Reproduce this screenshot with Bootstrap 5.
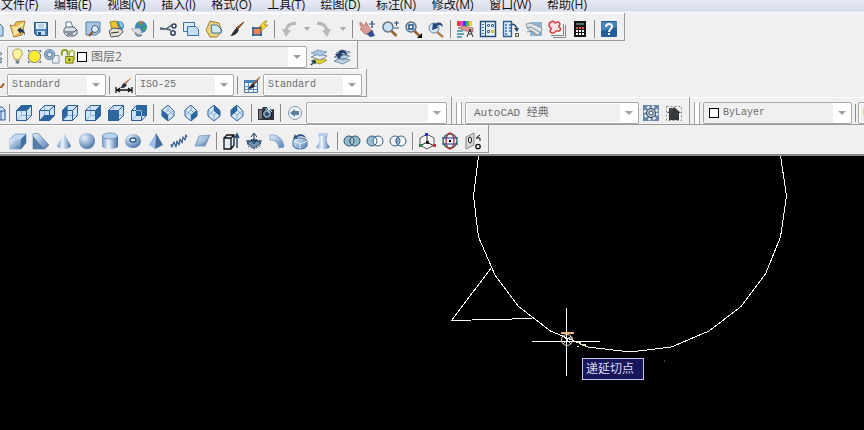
<!DOCTYPE html>
<html lang="zh-CN">
<head>
<meta charset="utf-8">
<meta name="viewport" content="width=device-width, initial-scale=1">
<title>AutoCAD 经典</title>
<link href="https://cdn.jsdelivr.net/npm/bootstrap@5.3.0/dist/css/bootstrap.min.css" rel="stylesheet">
<style>
body{background:#f0f0f0;font-family:"Open Sans","Noto Sans CJK SC",sans-serif;font-size:12px;line-height:16px}
.menu-strip{height:13px;background:linear-gradient(#e9ecf6,#d5d9ea 11px,#f7f7fb 12px)}
.menu-items{width:100%;max-width:587px;padding-left:1px}
.menu-strip a{color:#111;text-decoration:none}
.bar-row{height:28px}
.tool-bar{height:28px;padding:4px 4px 0 0;border:solid #9a9a9a;border-width:0 1px 1px 0;box-shadow:inset 0 1px #fff}
.tool{width:23px;height:22px;padding:0;border:0;background:none;flex:none;display:flex;align-items:center;justify-content:center}
.tool svg{width:18px;height:18px;flex:none;display:block}
.tool.cut{width:6px;justify-content:flex-end;overflow:hidden}
.tool.drop{width:13px}
.tool.drop svg{width:6px;height:4px}
.split{width:6px;height:18px;flex:none;background:linear-gradient(#8c8c8c,#8c8c8c) 3px 0/1px 100% no-repeat}
.grip{width:6px;height:22px;margin:0 3px 0 4px;flex:none;border:solid #a5a5a5;border-width:0 1px;background:#fff}
.lead-in{width:6px;flex:none}
.nudge{width:1px;flex:none}
.combo{height:22px;border:1px solid #a9a9a9;border-radius:2px;padding:0 20px 0 4px;color:#6c6c6c;appearance:none;box-shadow:inset 0 0 0 1px #fff;
 font:10px/18px "Liberation Mono","Noto Sans CJK SC",monospace;flex:none;
 background:url("data:image/svg+xml,%3Csvg xmlns='http://www.w3.org/2000/svg' viewBox='0 0 8 4'%3E%3Cpath d='M0 0h8L4 4z' fill='%23a0a0a0'/%3E%3C/svg%3E") right 5px center/8px 4px no-repeat,
 linear-gradient(#fff,#fff) right/18px 100% no-repeat,#f0f0f0}
.combo.style{width:99px}
.combo.view{width:141px}
.combo.space{width:174px;font-size:11px;padding-left:8px}
.combo.flat{flex:1;height:20px;border:0;padding-left:4px;font:12px/18px "Open Sans","Noto Sans CJK SC",sans-serif;box-shadow:none;min-width:0}
.layer-box{width:300px;height:22px;border:1px solid #a9a9a9;border-radius:2px;padding-left:1px}
.layer-box svg{width:17px;height:17px;flex:none;display:block}
.color-box{width:149px;height:22px;border:1px solid #a9a9a9;border-radius:2px;padding-left:5px}
.color-box .combo{font:10px/18px "Liberation Mono",monospace}
.swatch{width:10px;height:10px;border:1px solid #000;background:#fff;flex:none}
.board{background:#000;border-top:2px solid #858585;margin-top:1px;overflow:hidden}
.board svg{display:block;width:864px;height:274px}
.snap-tip{left:582px;top:202px;padding:2px 9px 2px 3px;border:1px solid #c6c6ea;background:#17175c;color:#dcdcf2}
</style>
</head>
<body>
<svg width="0" height="0" class="position-absolute" aria-hidden="true">
<defs>
<linearGradient id="blue" x1="0" y1="0" x2="1" y2="1"><stop offset="0" stop-color="#eaf3fc"/><stop offset="1" stop-color="#4f7cb2"/></linearGradient>
<linearGradient id="tube"><stop offset="0" stop-color="#6b93c4"/><stop offset=".4" stop-color="#eef6ff"/><stop offset="1" stop-color="#426da3"/></linearGradient>
<radialGradient id="ball" cx=".35" cy=".3" r=".8"><stop offset="0" stop-color="#e8f2fd"/><stop offset="1" stop-color="#3f6ba2"/></radialGradient>
</defs>
<symbol id="cube" viewBox="0 0 18 18"><path d="M1.500 6.500l5-5h10v10l-5 5h-10z" fill="#cfe4f7"/><path d="M6.500 1.500v10h10M6.500 11.500l-5 5" fill="none" stroke="#8fb4d8"/><path d="M1.500 6.500h10v10h-10zM1.500 6.500l5-5h10v10l-5 5M11.500 6.500l5-5" fill="none" stroke="#2d5d92"/></symbol>
<symbol id="iso" viewBox="0 0 18 18"><path d="M9 1l6 6v5l-6 5-6-5V6z" fill="#d6e8f8" stroke="#2d5d92"/><path d="M3 6l6 5 6-5M9 11v6M9 1v5l-6 6M9 6l6 6" fill="none" stroke="#6f9ac6" stroke-width=".8"/></symbol>
<symbol id="caret" viewBox="0 0 6 4"><path d="M0 0h6L3 4z" fill="#a8a8a8"/></symbol>
<symbol id="lens" viewBox="0 0 18 18"><circle cx="7" cy="7" r="5" fill="#c8e0f4" stroke="#62717f" stroke-width="1.500"/><path d="M10.500 11l5 5" stroke="#94632f" stroke-width="2.500"/></symbol>
<symbol id="printer" viewBox="0 0 18 18"><path d="M5 8V2h5l2 6" fill="#fff" stroke="#66788c"/><path d="M3 9l2-2h8l3 3v4l-3 2H6l-3-3z" fill="#d9dde4" stroke="#4d5a70"/><path d="M4 12h9l2-2M6 14h6" stroke="#39465d" fill="none"/></symbol>
<symbol id="layers" viewBox="0 0 18 18"><path d="M1 13l7-3 9 2-7 4z" fill="#e2d22c" stroke="#8d811c" stroke-width=".7"/><path d="M1 9l7-3 9 2-7 4z" fill="#e9edf2" stroke="#5d7690" stroke-width=".8"/><path d="M1 5l7-3 9 2-7 4z" fill="#abc6e3" stroke="#7893b5" stroke-width=".8"/></symbol>
<symbol id="rings" viewBox="0 0 18 18"><circle cx="6" cy="9" r="5"/><circle cx="12" cy="9" r="5"/></symbol>
</svg>

<header>
<nav class="menu-strip d-flex align-items-end text-nowrap overflow-hidden" aria-label="菜单">
<div class="menu-items d-flex justify-content-between">
<a href="#">文件(F)</a><a href="#">编辑(E)</a><a href="#">视图(V)</a><a href="#">插入(I)</a><a href="#">格式(O)</a><a href="#">工具(T)</a><a href="#">绘图(D)</a><a href="#">标注(N)</a><a href="#">修改(M)</a><a href="#">窗口(W)</a><a href="#">帮助(H)</a>
</div>
</nav>

<div class="bar-row d-flex overflow-hidden">
<div class="tool-bar d-flex align-items-center">
<button class="tool cut" aria-label="新建"><svg viewBox="0 0 18 18"><path d="M3 3h8l4 4v9H3z" fill="#b9d3ec" stroke="#4c789f"/></svg></button>
<button class="tool" aria-label="打开"><svg viewBox="0 0 18 18"><path d="M1 5l4 1 2-4 9-1-3 14-8 2z" fill="#e6bb57" stroke="#ad8434"/><path d="M3 6l4 1 8-5-3 9-7 5z" fill="#f7e3a1"/><path d="M8 10l4-3v2c3 0 4 3 4 7-1-3-2-4-4-4v2z" fill="#24384f"/></svg></button>
<button class="tool" aria-label="保存"><svg viewBox="0 0 18 18"><path d="M2.500 2.500h13v13h-11l-2-2z" fill="#4384bd" stroke="#235783"/><path d="M4 3h10v6H4z" fill="#e3f0fa"/><path d="M5 11h8v4H5z" fill="#c5d9eb"/><path d="M6 12h3v3H6z" fill="#245580"/><path d="M6 5h6M6 7h6" stroke="#8eb2d2"/></svg></button>
<span class="split"></span>
<button class="tool" aria-label="打印"><svg><use href="#printer"/></svg></button>
<button class="tool" aria-label="打印预览"><svg viewBox="0 0 18 18"><path d="M2 2h14v10l-4 3H2z" fill="#a8c8e8" stroke="#547da5"/><circle cx="11" cy="9" r="3.500" fill="#d6eaf8" stroke="#465c73"/><path d="M8.500 12L5 16" stroke="#875426" stroke-width="2"/></svg></button>
<button class="tool" aria-label="发布"><svg viewBox="0 0 18 18"><circle cx="12" cy="6" r="5" fill="#3f86c0"/><path d="M12 1c3 1 4 4 4 7l-3-2z" fill="#91cbe6"/><path d="M3 2l6-1 3 7-7 2z" fill="#f0c62f" stroke="#a38127"/><path d="M2 11l4-3 8 1 2 3-4 4-8 1z" fill="#e6e2d0" stroke="#46516a"/><path d="M4 13l8-1" stroke="#333"/></svg></button>
<button class="tool" aria-label="三维打印"><svg viewBox="0 0 18 18"><circle cx="11" cy="7" r="6" fill="#3d85b7"/><path d="M8 2c3-1 4 1 5 3l-3 2zM13 8l3-2v3l-3 3z" fill="#46a36a"/><path d="M9 1l4 1-2 3z" fill="#e26744"/><path d="M1 9l8-1 3 4-5 3z" fill="#d6dde5" stroke="#94a0ad" stroke-width=".7"/><path d="M5 13l3 3 4-1" stroke="#71879a" fill="none" stroke-width="2"/></svg></button>
<span class="split"></span>
<button class="tool" aria-label="剪切"><svg viewBox="0 0 18 18"><path d="M1 8l11 2M1 9h6l6-4" fill="none" stroke="#4f5d70" stroke-width="1.500"/><circle cx="15" cy="6" r="2" fill="none" stroke="#30405f" stroke-width="1.500"/><circle cx="14" cy="13" r="2.200" fill="none" stroke="#30405f" stroke-width="1.500"/></svg></button>
<button class="tool" aria-label="复制"><svg viewBox="0 0 18 18"><path d="M1.500 2.500h11v9h-11z" fill="#deecf8" stroke="#3f729f"/><path d="M5.500 6.500h8l3 3v6h-11z" fill="#c5def4" stroke="#3f729f"/></svg></button>
<button class="tool" aria-label="粘贴"><svg viewBox="0 0 18 18"><path d="M5 1l9 2 3 8-5 6H5l-4-7z" fill="#e8d37c" stroke="#9b8434"/><path d="M6 5h6l4 4v4H7z" fill="#d3e7f7" stroke="#3f729f"/></svg></button>
<button class="tool" aria-label="特性匹配"><svg viewBox="0 0 18 18"><path d="M16 2l-6 7-2-1z" fill="#b86f35" stroke="#704120"/><path d="M9 8l2 2c-2 4-5 6-9 6 3-2 3-6 7-8z" fill="#2f3033"/></svg></button>
<button class="tool" aria-label="块编辑器"><svg viewBox="0 0 18 18"><path d="M2 8h8v7H2z" fill="#ee8658" stroke="#315a84" stroke-width="1.500"/><path d="M1 7h2v2H1zM9 14h2v2H9zM1 14h2v2H1z" fill="#23609b"/><path d="M14 1L8 7h3l-2 5 8-7h-4l3-4z" fill="#ffdf2c" stroke="#8f7410" stroke-width=".7"/></svg></button>
<span class="split"></span>
<button class="tool" aria-label="放弃"><svg viewBox="0 0 18 18"><path d="M16 2C11 1 6 4 5 9H2l4 8 5-7H8c0-3 3-5 8-5z" fill="#b8b8b8"/></svg></button>
<button class="tool drop" aria-label="放弃列表"><svg><use href="#caret"/></svg></button>
<button class="tool" aria-label="重做"><svg viewBox="0 0 18 18"><path d="M1 2c5-1 10 2 11 7h3l-4 8-5-7h3C9 7 6 5 1 5z" fill="#b8b8b8"/></svg></button>
<button class="tool drop" aria-label="重做列表"><svg><use href="#caret"/></svg></button>
<span class="split"></span>
<button class="tool" aria-label="实时平移"><svg viewBox="0 0 18 18"><path d="M2 2l5 4 1-4 4 7 3 2-2 4-6-1-5-5 2-1-2-3z" fill="#dc9b99" stroke="#a8615f" stroke-width=".7"/><path d="M9 14l5-4 3 6-5 1z" fill="#304e86"/><path d="M14 1v7M11 4h6M13 2h2M13 7h2" stroke="#2d4f7c"/></svg></button>
<button class="tool" aria-label="实时缩放"><svg viewBox="0 0 18 18"><use href="#lens"/><path d="M13 3h5M15.500 1v5M13 8h5" stroke="#234b7c"/></svg></button>
<button class="tool" aria-label="窗口缩放"><svg viewBox="0 0 18 18"><use href="#lens"/><path d="M5 5h4v4H5z" fill="#fff" stroke="#245086" stroke-width="1.500"/><path d="M18 13v5h-5z"/></svg></button>
<button class="tool" aria-label="缩放上一个"><svg viewBox="0 0 18 18"><circle cx="7" cy="8" r="5" fill="#d1e6f6" stroke="#70869c"/><path d="M10 12l6 5" stroke="#ac8352" stroke-width="2.500"/><path d="M16 7c0-4-4-6-8-3L6 3l-1 7 6-2-1-2c2-2 4-1 6 1z" fill="#264a7c"/></svg></button>
<span class="split"></span>
<button class="tool" aria-label="特性"><svg viewBox="0 0 18 18"><path d="M1 1h3v5H1z" fill="#ea3932"/><path d="M4 1h3v5H4z" fill="#ef41c7"/><path d="M7 1h3v5H7z" fill="#3548de"/><path d="M10 1h3v5h-3z" fill="#42bd5c"/><path d="M13 1h3v5h-3z" fill="#f1cc36"/><path d="M2 8l6-2 9 2v4l-7-1z" fill="#db9994" stroke="#905f5c" stroke-width=".7"/><path d="M1 11h6M1 14h7M1 17h5" stroke="#3e88a1" stroke-width="1.500"/><path d="M11 17l3-8 3 8M12 14h4" fill="none" stroke="#303030"/></svg></button>
<button class="tool" aria-label="设计中心"><svg viewBox="0 0 18 18"><path d="M1.500 1.500h15v15h-15z" fill="#e9f4fc" stroke="#244f7b" stroke-width="1.500"/><path d="M6.500 2v14" stroke="#244f7b"/><path d="M3 4.500h2M3 7.500h2M3 10.500h2M3 13.500h2" stroke="#376d9d"/><path d="M8.500 4.500h2v2h-2zM12.500 4.500h2v2h-2zM8.500 10.500h2v2h-2z" fill="#fff" stroke="#3d6790"/><path d="M12 10h3v3h-3z" fill="#dfbf37"/></svg></button>
<button class="tool" aria-label="工具选项板"><svg viewBox="0 0 18 18"><path d="M1.500 1.500h8v15h-8z" fill="#d6e9f8" stroke="#31618c" stroke-width="1.300"/><path d="M3 5h2M7 5h2M3 8h2M7 8h2M3 11h2M7 11h2M3 14h2" stroke="#376d9d" stroke-width="1.500"/><path d="M9 4c5 0 6 3 6 7" fill="none" stroke="#244a73" stroke-width="1.500"/><path d="M12 8h5l-2 4z" fill="#244a73"/><path d="M13.500 13.500h3v3h-3z" fill="#eee9a0" stroke="#555"/></svg></button>
<button class="tool" aria-label="图纸集"><svg viewBox="0 0 18 18"><path d="M5 2h12v14H5z" fill="#8fb3d0"/><path d="M1 4l5-1 11 5-1 5-4 2L2 8z" fill="#dde3e5" stroke="#8a9aa3"/><path d="M2 8l4-1 10 6M2 12l5-1 5 4" stroke="#7b8c95" fill="none"/></svg></button>
<button class="tool" aria-label="标记集"><svg viewBox="0 0 18 18"><path d="M17.500 5v12.500H5M15.500 4v11.500H3" fill="none" stroke="#858585"/><path d="M1 1h13v13H1z" fill="#fff"/><path d="M3 2c2-2 3 0 4 1 2-2 5-1 5 1s-2 2-1 3c3 1 1 5-1 4-1-1-2 0-3 1-2 2-5 1-5-1s2-2 1-3C0 7 1 2 3 2z" fill="#fbe2e2" stroke="#d93b40" stroke-width="1.500"/></svg></button>
<button class="tool" aria-label="计算器"><svg viewBox="0 0 18 18"><path d="M3 1h12v16H3z" fill="#151515"/><path d="M5 3h8v2H5z" fill="#55705e"/><path d="M5 8h2M8 8h2M11 8h2" stroke="#e45656" stroke-width="2"/><path d="M5 11h2M8 11h2M11 11h2M5 14h2M8 14h2M11 14h2" stroke="#fff" stroke-width="2"/></svg></button>
<span class="split"></span>
<button class="tool" aria-label="帮助"><svg viewBox="0 0 18 18"><rect x="1" y="1" width="16" height="16" rx="1" fill="#235d98"/><path d="M1 2h16v5L1 11z" fill="#4b85b8"/><path d="M6 7c0-4 6-4 6 0 0 2-3 2-3 5" fill="none" stroke="#fff" stroke-width="2"/><path d="M8 13h2v2H8z" fill="#fff"/></svg></button>
</div></div>

<div class="bar-row d-flex overflow-hidden">
<div class="tool-bar d-flex align-items-center">
<button class="tool cut" aria-label="图层特性"><svg viewBox="0 0 18 18"><path d="M2 5l9-2 3 3-6 3zM2 9l9-1 3 3-6 2zM2 13l9-1 3 2-6 3z" fill="#e6eef5" stroke="#4f6f8c"/></svg></button>
<span class="nudge"></span>
<div class="layer-box d-flex align-items-center">
<svg viewBox="0 0 18 18"><path d="M6 12c0-2-2-3-2-6s2-5 5-5 5 2 5 5-3 4-3 6z" fill="#fdf59a" stroke="#a69a49"/><path d="M7 13h4v3l-2 1-2-1z" fill="#77868f"/></svg>
<svg viewBox="0 0 18 18"><path d="M2 2h3L2 5zM16 2h-3l3 3zM2 16h3l-3-3zM16 16h-3l3-3z" fill="#777"/><circle cx="9" cy="9" r="6.500" fill="#ffe832" stroke="#637d87"/></svg>
<svg viewBox="0 0 18 18"><path d="M10 8h7v8h-7z" fill="#eee" stroke="#8495a3"/><circle cx="7" cy="7" r="5.500" fill="#91afc8" stroke="#6389a8"/><circle cx="7" cy="7" r="2.500" fill="#dce9f2" stroke="#577b9a"/></svg>
<svg viewBox="0 0 18 18"><path d="M2 8V5c0-4 6-4 6 0v3" fill="none" stroke="#899b22" stroke-width="2"/><path d="M6 9h8v7H6z" fill="#d7dd35" stroke="#6c7819"/><path d="M10 8V5c0-3 5-3 5 0v8" fill="none" stroke="#a2af2c" stroke-width="1.500"/><path d="M9 11h2v3H9z" fill="#48521d"/></svg>
<span class="swatch"></span>
<select class="combo flat" aria-label="图层"><option>图层2</option></select>
</div>
<button class="tool" aria-label="将对象的图层置为当前"><svg viewBox="0 0 18 18"><use href="#layers"/><path d="M1 17l4-4M2 13h3v3" stroke="#1c3658" fill="none" stroke-width="1.300"/></svg></button>
<button class="tool" aria-label="上一个图层"><svg viewBox="0 0 18 18"><path d="M1 13l7-3 9 2-7 4zM1 9l7-3 9 2-7 4zM3 5l6-3 8 2-7 4z" fill="#c3d4e5" stroke="#5d7892" stroke-width=".8"/><path d="M14 8c0-7-8-8-9-2H2l4 5 4-5H8c1-2 4-1 6 2z" fill="#263f6b"/></svg></button>
</div></div>

<div class="bar-row d-flex overflow-hidden">
<div class="tool-bar d-flex align-items-center">
<button class="tool cut" aria-label="文字样式"><svg viewBox="0 0 18 18"><path d="M11 12l4-5 2 1-3 4z" fill="#a76332"/></svg></button>
<span class="nudge"></span>
<select class="combo style" aria-label="文字样式列表"><option>Standard</option></select>
<span class="split"></span>
<button class="tool" aria-label="标注样式"><svg viewBox="0 0 18 18"><path d="M17 1l-6 7-2-1z" fill="#b86c34"/><path d="M9 7l3 2c-2 3-4 3-7 3 2-1 2-4 4-5z" fill="#292d32"/><path d="M1 11v6M17 11v6M2 14h14M5 12l-3 2 3 2M13 12l3 2-3 2" fill="none" stroke="#111" stroke-width="1.300"/></svg></button>
<select class="combo style" aria-label="标注样式列表"><option>ISO-25</option></select>
<span class="split"></span>
<button class="tool" aria-label="表格样式"><svg viewBox="0 0 18 18"><path d="M1.500 4.500h13v12h-13z" fill="#eff6fc" stroke="#406f9c"/><path d="M1 4h14v3H1z" fill="#4b83b8"/><path d="M1 10.500h14M1 13.500h14M5.500 7v10M10.500 7v10" stroke="#5e8fbd"/><path d="M17 1l-5 7-2-1z" fill="#ba6c32" stroke="#653a1e" stroke-width=".6"/><path d="M10 7l2 2c-1 3-4 4-7 4 2-2 3-5 5-6z" fill="#2a2c32"/></svg></button>
<select class="combo style" aria-label="表格样式列表"><option>Standard</option></select>
</div></div>

<div class="bar-row d-flex overflow-hidden">
<div class="tool-bar d-flex align-items-center flex-shrink-0">
<button class="tool cut" aria-label="命名视图"><svg viewBox="0 0 18 18"><path d="M8 3h6l3 3v10H8z" fill="#cfe4f7" stroke="#2d5d92"/><path d="M8 7h9M13 7v9" stroke="#2d5d92"/></svg></button>
<span class="split"></span>
<button class="tool" aria-label="俯视"><svg viewBox="0 0 18 18"><use href="#cube"/><path d="M1 7l5.500-6H17l-5.500 6z" fill="#2d659e"/></svg></button>
<button class="tool" aria-label="仰视"><svg viewBox="0 0 18 18"><use href="#cube"/><path d="M1 17l5.500-6H17l-5.500 6z" fill="#2d659e"/></svg></button>
<button class="tool" aria-label="左视"><svg viewBox="0 0 18 18"><use href="#cube"/><path d="M1 6.500L6.500 1v10.500L1 17z" fill="#2d659e"/></svg></button>
<button class="tool" aria-label="右视"><svg viewBox="0 0 18 18"><use href="#cube"/><path d="M11.500 6.500L17 1v10.500L11.500 17z" fill="#2d659e"/></svg></button>
<button class="tool" aria-label="前视"><svg viewBox="0 0 18 18"><use href="#cube"/><path d="M1 6h11v11H1z" fill="#2d659e"/></svg></button>
<button class="tool" aria-label="后视"><svg viewBox="0 0 18 18"><use href="#cube"/><path d="M6 1h11v11H6z" fill="#2d659e"/><path d="M6 6.500h5.500V12" fill="none" stroke="#8fb4d8"/></svg></button>
<span class="split"></span>
<button class="tool" aria-label="西南等轴测"><svg viewBox="0 0 18 18"><use href="#iso"/><path d="M3 6l6 5v6l-6-5z" fill="#2d659e"/></svg></button>
<button class="tool" aria-label="东南等轴测"><svg viewBox="0 0 18 18"><use href="#iso"/><path d="M15 6l-6 5v6l6-5z" fill="#2d659e"/></svg></button>
<button class="tool" aria-label="东北等轴测"><svg viewBox="0 0 18 18"><use href="#iso"/><path d="M9 1l6 5v6L9 7z" fill="#2d659e"/></svg></button>
<button class="tool" aria-label="西北等轴测"><svg viewBox="0 0 18 18"><use href="#iso"/><path d="M9 1L3 6v6l6-5z" fill="#2d659e"/></svg></button>
<span class="split"></span>
<button class="tool" aria-label="创建相机"><svg viewBox="0 0 18 18"><path d="M1 5h4l1-2h5l1 2h5v11H1z" fill="#30353b"/><path d="M2 6h3v9H2z" fill="#6f777e"/><circle cx="10" cy="10" r="4.500" fill="#829cb4" stroke="#111"/><circle cx="10" cy="10" r="2" fill="#2c4966"/><path d="M12 1v8M8 5h8M10 3l5 5M15 2l-5 5" stroke="#cce9ff"/></svg></button>
<span class="split"></span>
<button class="tool" aria-label="上一视图"><svg viewBox="0 0 18 18"><circle cx="9" cy="9" r="6.500" fill="#eef4f8" stroke="#7c98ae"/><path d="M4 9l5-4v2h4v4H9v2z" fill="#5d7f9f"/></svg></button>
<select class="combo view" aria-label="视图列表"><option></option></select>
</div>
<div class="tool-bar d-flex align-items-center flex-shrink-0">
<span class="grip"></span>
<select class="combo space" aria-label="工作空间"><option>AutoCAD 经典</option></select>
<button class="tool" aria-label="工作空间设置"><svg viewBox="0 0 18 18"><path d="M1 1h16v16H1z" fill="#6686a3"/><circle cx="9" cy="9" r="6" fill="none" stroke="#e3e9ee" stroke-width="3" stroke-dasharray="2.500 2.212"/><circle cx="9" cy="9" r="4.500" fill="#b5c1cb" stroke="#32465b"/><circle cx="9" cy="9" r="2" fill="#fff" stroke="#354c62"/></svg></button>
<button class="tool" aria-label="我的工作空间"><svg viewBox="0 0 18 18"><path d="M1.500 2.500h15v14h-15z" fill="none" stroke="#8a8a8a" stroke-dasharray="2 2"/><path d="M9 3l7 6h-2v7H4V9H2z" fill="#35383c"/><path d="M4 4h3v5H4z" fill="#444"/></svg></button>
</div>
<div class="tool-bar d-flex align-items-center flex-grow-1 border-end-0">
<span class="grip"></span>
<div class="color-box d-flex align-items-center flex-shrink-0"><span class="swatch"></span><select class="combo flat" aria-label="颜色"><option>ByLayer</option></select></div>
<span class="split"></span>
<select class="combo style" aria-label="线型"><option>ByLayer</option></select>
</div>
</div>

<div class="bar-row d-flex overflow-hidden">
<div class="tool-bar d-flex align-items-center">
<span class="lead-in"></span>
<button class="tool" aria-label="长方体"><svg viewBox="0 0 18 18"><path d="M1 7l5-5h11v9l-5 6H1z" fill="#c3daf2" stroke="#6f93bb" stroke-width=".7"/><path d="M1 7h11v10H1z" fill="url(#blue)"/><path d="M12 7l5-5v9l-5 6z" fill="#426f9f"/></svg></button>
<button class="tool" aria-label="楔体"><svg viewBox="0 0 18 18"><path d="M1 2l5-1 11 12-4 4H1z" fill="url(#blue)" stroke="#6183a9" stroke-width=".7"/><path d="M1 4l11 13H1z" fill="#557da8"/></svg></button>
<button class="tool" aria-label="圆锥体"><svg viewBox="0 0 18 18"><path d="M9 1L2 14c1 4 13 4 14 0z" fill="url(#tube)"/></svg></button>
<button class="tool" aria-label="球体"><svg viewBox="0 0 18 18"><circle cx="9" cy="9" r="8" fill="url(#ball)"/></svg></button>
<button class="tool" aria-label="圆柱体"><svg viewBox="0 0 18 18"><path d="M1 4v10c0 4 16 4 16 0V4z" fill="url(#tube)"/><ellipse cx="9" cy="4" rx="7.500" ry="3" fill="#b9d4ef" stroke="#567ca8" stroke-width=".7"/></svg></button>
<button class="tool" aria-label="圆环体"><svg viewBox="0 0 18 18"><ellipse cx="9" cy="9" rx="8" ry="7" fill="url(#ball)"/><ellipse cx="9" cy="8" rx="3" ry="2" fill="#e9eff6" stroke="#305e90" stroke-width="1.500"/></svg></button>
<button class="tool" aria-label="棱锥体"><svg viewBox="0 0 18 18"><path d="M9 1L2 13l6 4z" fill="#9dc0e4"/><path d="M9 1l7 12-8 4z" fill="#426f9f"/></svg></button>
<button class="tool" aria-label="螺旋"><svg viewBox="0 0 18 18"><path d="M1 12l1 3 2-5 2 5 1-6 2 4 1-6 2 4 1-6 2 3 1-5 1 2" fill="none" stroke="#3d638f" stroke-width="1.300" stroke-linejoin="round"/></svg></button>
<button class="tool" aria-label="平面曲面"><svg viewBox="0 0 18 18"><path d="M6 4l11-1-5 11H2z" fill="url(#blue)" stroke="#6485aa" stroke-width=".7"/><path d="M7 7l6-1-2 4-5 1z" fill="#aac6e2"/></svg></button>
<span class="split"></span>
<button class="tool" aria-label="拉伸"><svg viewBox="0 0 18 18"><path d="M2 6l3-3h7v10l-3 4H2z" fill="#e2edf8"/><path d="M2 6h7v11H2zM2 6l3-3h7v10l-3 4M9 6l3-3" fill="none" stroke="#111" stroke-width="1.300"/><path d="M15 16V4M13 6l2-4 2 4" stroke="#214b75" fill="none" stroke-width="1.500"/></svg></button>
<button class="tool" aria-label="按住并拖动"><svg viewBox="0 0 18 18"><path d="M2 11l7-4 7 4-7 5z" fill="#7293b4" stroke="#2c4868"/><path d="M3 8v6l6 3 6-3V8" fill="none" stroke="#2c4868" stroke-dasharray="2 1"/><path d="M9 10V2M6 5l3-4 3 4M1 9h16M6 7l3 5 3-5" fill="none" stroke="#193859"/></svg></button>
<button class="tool" aria-label="扫掠"><svg viewBox="0 0 18 18"><path d="M2 3c8-1 13 4 14 12l-5 1C10 10 7 8 2 8z" fill="url(#blue)" stroke="#7095bd" stroke-width=".7"/></svg></button>
<button class="tool" aria-label="旋转"><svg viewBox="0 0 18 18"><path d="M2 9c0-4 14-4 14 0v5c-2 4-12 4-14 0z" fill="url(#blue)" stroke="#426f9f"/><path d="M3 9c4 3 9 3 13 0M9 11v6" fill="none" stroke="#e6f4ff"/><path d="M15 6c-1-4-7-5-10-2L4 2 2 7l5-1-1-1c3-1 6-1 9 1z" fill="#28527f"/></svg></button>
<button class="tool" aria-label="放样"><svg viewBox="0 0 18 18"><path d="M4 2c2-1 8-1 10 0-2 6-2 8 2 13-3 3-11 3-14 0 4-5 4-7 2-13z" fill="url(#tube)"/><ellipse cx="9" cy="2.500" rx="5" ry="1.500" fill="#b5cfea"/></svg></button>
<span class="split"></span>
<button class="tool" aria-label="并集"><svg><use href="#rings" fill="#90bac5" stroke="#315574"/><path d="M9 5a5 5 0 010 8 5 5 0 010-8z" fill="#a9cbd6" stroke="#315574"/></svg></button>
<button class="tool" aria-label="差集"><svg viewBox="0 0 18 18"><circle cx="6" cy="9" r="5" fill="#9bbfd0" stroke="#365f8a"/><circle cx="12" cy="9" r="5" fill="#f6f8fa" stroke="#365f8a"/><path d="M9 5a5 5 0 010 8" fill="none" stroke="#365f8a"/></svg></button>
<button class="tool" aria-label="交集"><svg viewBox="0 0 18 18"><use href="#rings" fill="#f5f8fa" stroke="#365f8a"/><path d="M9 5a5 5 0 010 8 5 5 0 010-8z" fill="#8fb7cb" stroke="#365f8a"/></svg></button>
<span class="split"></span>
<button class="tool" aria-label="三维移动"><svg viewBox="0 0 18 18"><path d="M9 2l7 4v7l-7 4-7-4V6z" fill="#f5f5f5" stroke="#555"/><path d="M9 2v8l7 4M9 10l-7 4" fill="none" stroke="#222"/><path d="M7 1h3v3H7z" fill="#2733b4"/><path d="M15 12h3v3h-3z" fill="#d52f35"/><path d="M1 12h3v3H1z" fill="#288345"/><path d="M8 9h3v3H8z" fill="#222"/></svg></button>
<button class="tool" aria-label="三维旋转"><svg viewBox="0 0 18 18"><circle cx="9" cy="9" r="7" fill="none" stroke="#27745d" stroke-width="1.500"/><ellipse cx="9" cy="9" rx="4" ry="8" fill="none" stroke="#c22e3a" stroke-width="1.300"/><path d="M1 6h16M1 12h16" stroke="#2b3b98"/><path d="M8 8h2v2H8z"/></svg></button>
<button class="tool" aria-label="三维对齐"><svg viewBox="0 0 18 18"><path d="M2 5l8-4v12l-8 4z" fill="#d7d7d7" stroke="#888"/><ellipse cx="6" cy="8" rx="1.500" ry="3" fill="#fff" stroke="#111"/><path d="M16 3l-4 3h4v3" fill="none" stroke="#111"/><circle cx="14" cy="14.500" r="2.200" fill="#fff" stroke="#111" stroke-width="1.300"/></svg></button>
</div></div>
</header>

<main class="board position-relative">
<svg viewBox="0 156 864 274" role="img" aria-label="圆与三角形">
<g fill="none" stroke="#fff" shape-rendering="crispEdges">
<path d="M478.500 156L473.500 196l5 41 16.500 38 23.500 31.500 32 24.500 15.500 6.500 22 9.500 42 5 41.500-5 37.500-16 32-24.500 24.500-32.500 15-37 6-41-6-40.500"/>
<path d="M491.500 267.500l-40 53 81-2"/>
<path d="M566.500 308v68M532 341.500h68"/>
</g>
<path d="M561 332h13v2h-13z" fill="#f0b878"/>
<circle cx="567" cy="340" r="5.500" fill="none" stroke="#e6cdb9"/>
<path d="M563 336l8 8M571 336l-8 8M568 338h5" stroke="#ddd" fill="none"/>
<path d="M576 342h4v2h2v2M577 346h2M583 344h2v2h3" fill="none" stroke="#e8dcc0" shape-rendering="crispEdges"/>
<path d="M664 360h1v2h-1z" fill="#444"/>
</svg>
<div class="snap-tip position-absolute text-nowrap">递延切点</div>
</main>
</body>
</html>
